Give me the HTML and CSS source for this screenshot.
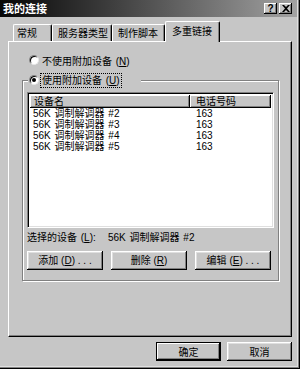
FILE: index.html
```html
<!DOCTYPE html>
<html lang="zh-CN">
<head>
<meta charset="utf-8">
<title>我的连接</title>
<link rel="stylesheet" href="styles.css">
</head>
<body>
<div class="dialog">
  <div class="titlebar">
    <span class="title">我的连接</span>
    <div class="tbtns">
      <span class="tbtn help">?</span>
      <span class="tbtn close"><svg width="8" height="7" viewBox="0 0 8 7"><path d="M0 0h2l2 2 2-2h2L5 3.5 8 7H6L4 5 2 7H0l3-3.5z" fill="#000"/></svg></span>
    </div>
  </div>
  <div class="tabs">
    <div class="tab t1">常规</div>
    <div class="tab t2">服务器类型</div>
    <div class="tab t3">制作脚本</div>
    <div class="tab active">多重链接</div>
  </div>
  <div class="panel">
    <div class="radio-row"><span class="rb"></span><span class="rtext">不使用附加设备 (<u>N</u>)</span></div>
    <fieldset class="group">
      <legend class="legend"><span class="rb on"></span><span class="focus">使用附加设备 (<u>U</u>)</span></legend>
      <div class="list">
        <div class="lhead"><span class="hc c1">设备名</span><span class="hc c2">电话号码</span></div>
        <div class="lrow"><span class="r1">56K 调制解调器 #2</span><span class="r2">163</span></div>
        <div class="lrow"><span class="r1">56K 调制解调器 #3</span><span class="r2">163</span></div>
        <div class="lrow"><span class="r1">56K 调制解调器 #4</span><span class="r2">163</span></div>
        <div class="lrow"><span class="r1">56K 调制解调器 #5</span><span class="r2">163</span></div>
      </div>
      <div class="sel"><span class="sel-label">选择的设备 (<u>L</u>):</span><span>56K 调制解调器 #2</span></div>
      <div class="btns">
        <button class="btn">添加 (<u>D</u>) . . .</button>
        <button class="btn">删除 (<u>R</u>)</button>
        <button class="btn">编辑 (<u>E</u>) . . .</button>
      </div>
    </fieldset>
  </div>
  <div class="footer">
    <button class="btn wide default">确定</button>
    <button class="btn wide">取消</button>
  </div>
</div>
</body>
</html>
```
FILE: styles.css
```css
* { box-sizing: border-box; }
html, body { margin: 0; padding: 0; }
body {
  width: 300px;
  height: 369px;
  overflow: hidden;
  background: #c6c6c6;
  font-family: "Liberation Sans", "Noto Sans CJK SC", sans-serif;
  font-size: 10px;
  word-spacing: 1px;
  color: #000;
}
u { text-decoration: underline; }

.dialog {
  width: 300px;
  height: 369px;
  background: #c6c6c6;
  box-shadow: inset -1px -1px 0 #000, inset -2px -2px 0 #808080, inset -3px -3px 0 #dfdfdf;
  display: flex;
  flex-direction: column;
}

.titlebar {
  height: 17px;
  margin-right: 3px;
  padding: 0 5px 0 3px;
  display: flex;
  align-items: center;
  justify-content: space-between;
  background: linear-gradient(to right, #060606, #3a3a3a 35%, #a2a2a2);
  color: #fff;
  font-family: "Noto Sans CJK SC", sans-serif;
  font-size: 11px;
  font-weight: bold;
}
.title { line-height: 17px; }
.tbtns { display: flex; gap: 2px; }
.tbtn {
  width: 13px;
  height: 11px;
  background: #c6c6c6;
  box-shadow: inset -1px -1px 0 #000, inset 1px 1px 0 #fff, inset -2px -2px 0 #808080;
  display: flex;
  align-items: center;
  justify-content: center;
  color: #000;
}
.help {
  font-family: "Liberation Sans", sans-serif;
  font-size: 10px;
  font-weight: bold;
  line-height: 11px;
}

.tabs {
  display: flex;
  align-items: flex-end;
  height: 20px;
  margin-top: 4px;
  padding-left: 13px;
}
.tab {
  height: 17px;
  line-height: 15px;
  padding-left: 5px;
  font-family: "Noto Sans CJK SC", sans-serif;
  border-top: 1px solid #fff;
  border-left: 1px solid #fff;
  border-right: 1px solid #000;
  border-radius: 2px 2px 0 0;
  box-shadow: inset -1px 0 0 #808080;
  white-space: nowrap;
}
.t1 { width: 39px; padding-left: 3px; }
.t2 { width: 60px; }
.t3 { width: 53px; }
.tab.active {
  width: 55px;
  height: 21px;
  line-height: 18px;
  padding-left: 6px;
  margin-bottom: -1px;
  background: #c6c6c6;
  position: relative;
  z-index: 1;
}

.panel {
  margin: 0 8px;
  height: 296px;
  border-top: 1px solid #fff;
  border-left: 1px solid #fff;
  border-right: 1px solid #000;
  border-bottom: 1px solid #000;
  box-shadow: inset -1px -1px 0 #808080;
  padding: 11px 12px 0 13px;
}

.radio-row {
  display: flex;
  align-items: center;
  height: 14px;
  margin-left: 7px;
  gap: 3px;
}
.rb {
  width: 10px;
  height: 10px;
  flex: none;
  border-radius: 50%;
  background: #fff;
  border: 1px solid;
  border-color: #808080 #e8e8e8 #e8e8e8 #808080;
  box-shadow: inset 1px 1px 0 #000;
  display: flex;
  align-items: center;
  justify-content: center;
}
.rb.on::after {
  content: "";
  width: 4px;
  height: 4px;
  border-radius: 50%;
  background: #000;
}

.group {
  margin: 6px 0 0 0;
  width: 257px;
  min-width: 0;
  padding: 0 4px 10px 4px;
  border: 1px solid #808080;
  box-shadow: 1px 1px 0 #fff, inset 1px 1px 0 #fff;
}
.legend {
  display: flex;
  align-items: center;
  gap: 2px;
  height: 14px;
  margin-left: 1px;
  padding: 0 20px 0 1px;
  background: #c6c6c6;
}
.focus {
  outline: 1px dotted #000;
  outline-offset: 0;
  padding: 0 1px;
  line-height: 13px;
}

.list {
  margin-top: 5px;
  height: 136px;
  background: #fff;
  border: 1px solid;
  border-color: #808080 #fff #fff #808080;
  box-shadow: inset 1px 1px 0 #000, inset -1px -1px 0 #dfdfdf;
  padding: 2px;
}
.lhead { display: flex; height: 13px; }
.hc {
  height: 13px;
  line-height: 13px;
  background: #c6c6c6;
  box-shadow: inset -1px -1px 0 #000, inset 1px 1px 0 #fff, inset -2px -2px 0 #808080;
}
.c1 { width: 160px; padding-left: 4px; }
.c2 { width: 81px; padding-left: 6px; }
.lrow { display: flex; height: 11px; line-height: 11px; white-space: nowrap; }
.r1 { width: 160px; padding-left: 3px; }
.r2 { padding-left: 6px; }

.sel {
  display: flex;
  height: 14px;
  line-height: 14px;
  margin-top: 3px;
  white-space: nowrap;
}
.sel-label { width: 81px; flex: none; }

.btns { display: flex; gap: 8px; margin-top: 6px; }
.btn {
  width: 76px;
  height: 19px;
  padding: 0;
  border: none;
  background: #c6c6c6;
  font: inherit;
  color: #000;
  line-height: 17px;
  text-align: center;
  white-space: nowrap;
  box-shadow: inset -1px -1px 0 #000, inset 1px 1px 0 #fff, inset -2px -2px 0 #808080, inset 2px 2px 0 #dfdfdf;
}

.footer {
  display: flex;
  justify-content: flex-end;
  gap: 6px;
  padding: 5px 8px 0 0;
}
.btn.wide { width: 65px; font-family: "Noto Sans CJK SC", sans-serif; }
.btn.default {
  box-shadow: inset 0 0 0 1px #000, inset -2px -2px 0 #000, inset 2px 2px 0 #fff, inset -3px -3px 0 #808080;
}
```
